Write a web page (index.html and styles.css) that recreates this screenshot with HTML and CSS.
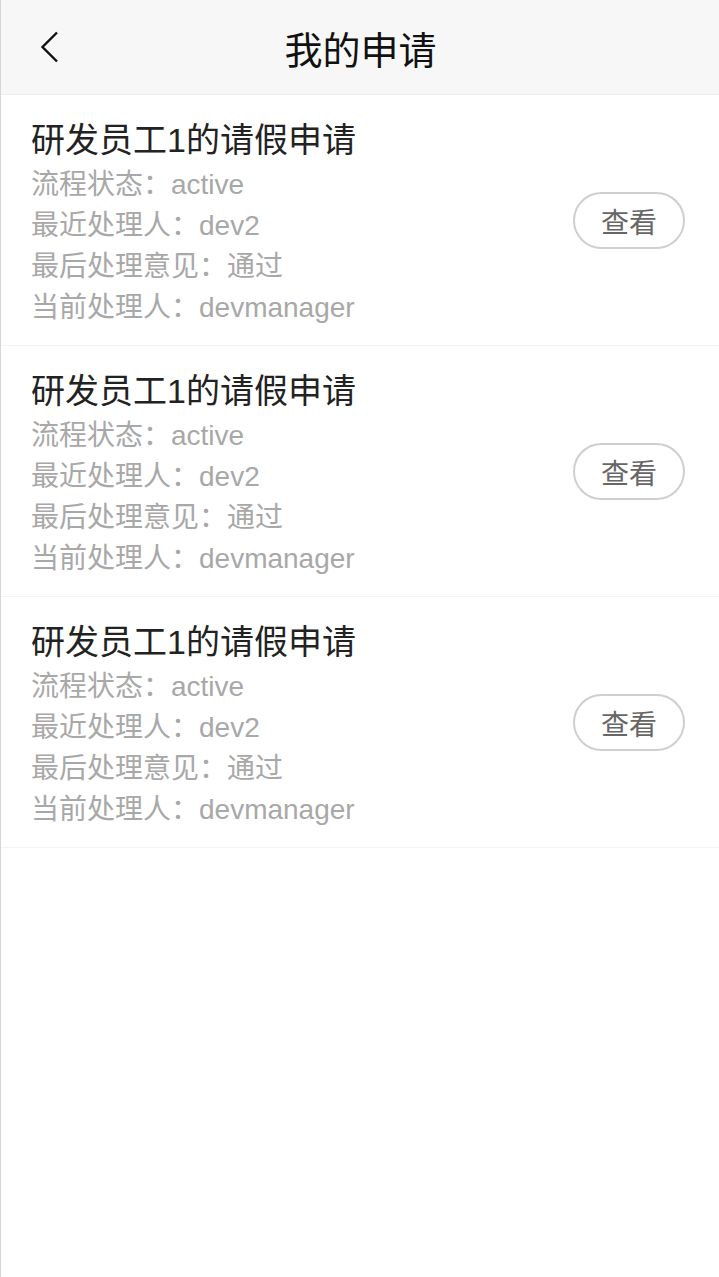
FILE: index.html
```html
<!DOCTYPE html>
<html lang="zh">
    <head>
        <meta charset="utf-8">
        <title>我的申请</title>
        <link rel="stylesheet" href="styles.css">
    </head>
    <body>
        <div id="page">
            <div id="header">
                <span class="backButton">
                    <svg width="20" height="32" viewBox="0 0 20 32">
                        <polyline points="17,1.5 2.5,16 17,30.5" fill="none" stroke="#111" stroke-width="2.4"/>
                    </svg>
                </span>
                <div class="headerTitle">我的申请</div>
            </div>
            <div id="applyList">
                <div class="applyItem">
                    <div class="applyInfo">
                        <p class="applyTitle">研发员工1的请假申请</p>
                        <p class="applyText">流程状态：active</p>
                        <p class="applyText">最近处理人：dev2</p>
                        <p class="applyText">最后处理意见：通过</p>
                        <p class="applyText">当前处理人：devmanager</p>
                    </div>
                    <button type="button" class="viewButton">查看</button>
                </div>
                <div class="applyItem">
                    <div class="applyInfo">
                        <p class="applyTitle">研发员工1的请假申请</p>
                        <p class="applyText">流程状态：active</p>
                        <p class="applyText">最近处理人：dev2</p>
                        <p class="applyText">最后处理意见：通过</p>
                        <p class="applyText">当前处理人：devmanager</p>
                    </div>
                    <button type="button" class="viewButton">查看</button>
                </div>
                <div class="applyItem">
                    <div class="applyInfo">
                        <p class="applyTitle">研发员工1的请假申请</p>
                        <p class="applyText">流程状态：active</p>
                        <p class="applyText">最近处理人：dev2</p>
                        <p class="applyText">最后处理意见：通过</p>
                        <p class="applyText">当前处理人：devmanager</p>
                    </div>
                    <button type="button" class="viewButton">查看</button>
                </div>
            </div>
        </div>
    </body>
</html>
```

FILE: styles.css
```css
body {
    margin: 0;
    background: white;
    font-family: "Liberation Sans", "Noto Sans CJK SC", sans-serif;
}
#page {
    min-height: 1277px;
    border-left: 1px solid #d6d6d6;
    box-sizing: border-box;
}
#header {
    height: 94px;
    background: #f7f7f7;
    border-bottom: 1px solid #ececec;
    display: flex;
    align-items: center;
    justify-content: center;
    position: relative;
}
.backButton {
    position: absolute;
    left: 39px;
    top: 31px;
    display: flex;
}
.headerTitle {
    font-size: 38px;
    color: #111;
    margin-left: 1px;
}
.applyItem {
    display: flex;
    align-items: center;
    justify-content: space-between;
    padding: 22px 34px 17px 30px;
    border-bottom: 1px solid #f3f3f3;
}
.applyInfo p {
    margin: 0;
}
.applyTitle {
    font-size: 34px;
    line-height: 47px;
    color: #222;
}
.applyText {
    font-size: 28px;
    line-height: 41px;
    color: #a8a8a8;
}
.viewButton {
    width: 112px;
    height: 57px;
    border: 2px solid #cfcfd2;
    border-radius: 29px;
    background: white;
    font-family: "Liberation Sans", "Noto Sans CJK SC", sans-serif;
    font-size: 28px;
    color: #666;
    padding: 0;
    margin-top: -4px;
}
```
